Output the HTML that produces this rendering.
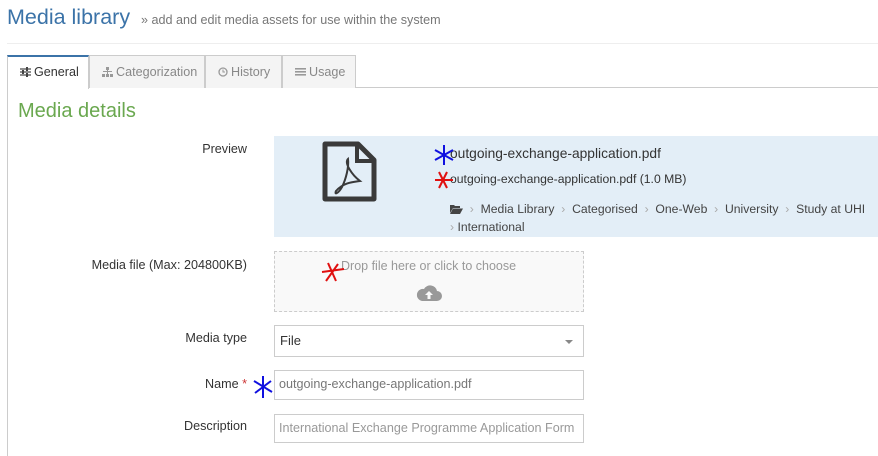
<!DOCTYPE html>
<html><head><style>
*{box-sizing:border-box;margin:0;padding:0}
body{width:878px;height:456px;overflow:hidden;background:#fff;font-family:"Liberation Sans",sans-serif;color:#333;position:relative}
.a{position:absolute}
.lbl{position:absolute;right:631px;font-size:12.6px;color:#333;text-align:right;white-space:nowrap}
.inp{position:absolute;left:274px;width:310px;border:1px solid #ccc;background:#fff;font-size:12.6px}
.tab{position:absolute;top:55px;height:33px;border:1px solid #ccc;border-bottom:none;background:#f4f4f4;font-size:12.6px;color:#888;padding:9px 0 0 12px;white-space:nowrap}
</style></head><body>
<div class="a" style="left:7px;top:5px;font-size:21.5px;color:#3b73a8">Media library</div>
<div class="a" style="left:141px;top:13px;font-size:12.6px;color:#777">» add and edit media assets for use within the system</div>
<div class="a" style="left:7px;top:43px;width:871px;border-top:1px solid #eee"></div>
<div class="a" style="left:7px;top:87px;width:871px;height:369px;border-left:1px solid #ccc;border-top:1px solid #ccc"></div>
<div class="tab" style="left:7px;width:82px;background:#fff;color:#333;border-top:2px solid #3b73a8;height:34px;padding-top:8px">
<svg width="11" height="10" style="vertical-align:-1px;margin-right:3px"><g stroke="#444" stroke-width="1.2"><line x1="0" y1="2" x2="11" y2="2"/><line x1="0" y1="5" x2="11" y2="5"/><line x1="0" y1="8" x2="11" y2="8"/></g><g fill="#444"><rect x="6" y="0" width="2" height="4"/><rect x="2" y="3" width="2" height="4"/><rect x="6" y="6" width="2" height="4"/></g></svg>General</div>
<div class="tab" style="left:89px;width:116px"><svg width="11" height="10" style="vertical-align:-1px;margin-right:3px" fill="#999"><rect x="4" y="0" width="3" height="3"/><rect x="0" y="7" width="3" height="3"/><rect x="4" y="7" width="3" height="3"/><rect x="8" y="7" width="3" height="3"/><rect x="1" y="4" width="9" height="1"/><rect x="5" y="3" width="1" height="4"/></svg>Categorization</div>
<div class="tab" style="left:205px;width:77px"><svg width="10" height="10" style="vertical-align:-1px;margin-right:3px"><circle cx="5" cy="5" r="4" fill="none" stroke="#999" stroke-width="1.3"/><path d="M5 2.5V5H7" stroke="#999" fill="none"/></svg>History</div>
<div class="tab" style="left:282px;width:74px"><svg width="11" height="10" style="vertical-align:-1px;margin-right:3px" fill="#999"><rect x="0" y="1" width="11" height="1.6"/><rect x="0" y="4" width="11" height="1.6"/><rect x="0" y="7" width="11" height="1.6"/></svg>Usage</div>
<div class="a" style="left:18px;top:100px;font-size:20px;color:#6aa84f">Media details</div>

<div class="lbl" style="top:142px">Preview</div>
<div class="a" style="left:274px;top:136px;width:604px;height:101px;background:#e3eef7"></div>
<svg class="a" style="left:322px;top:141px" width="56" height="62"><path d="M3 3H36L52 19V58H3Z" fill="none" stroke="#3a3a3a" stroke-width="5" stroke-linejoin="round"/><path d="M35 4V20H51" fill="none" stroke="#3a3a3a" stroke-width="4"/><path d="M26 18C22 22 30 34 38 40C32 41 22 41 14 50C12 54 16 53 20 46C24 38 27 26 26 18Z" fill="none" stroke="#3a3a3a" stroke-width="2"/></svg>
<div class="a" style="left:450px;top:146px;font-size:13.8px;color:#333">outgoing-exchange-application.pdf</div>
<div class="a" style="left:450px;top:172px;font-size:12.2px;color:#333">outgoing-exchange-application.pdf (1.0 MB)</div>
<svg class="a" style="left:433px;top:144px" width="22" height="22" stroke="#1010e0" stroke-width="2"><line x1="11" y1="1" x2="11" y2="21"/><line x1="2" y1="6" x2="20" y2="16"/><line x1="2" y1="16" x2="20" y2="6"/></svg>
<svg class="a" style="left:433px;top:170px" width="22" height="20" stroke="#e01010" stroke-width="2"><line x1="2" y1="10" x2="20" y2="10"/><line x1="6" y1="2" x2="14" y2="18"/><line x1="14" y1="2" x2="6" y2="18"/></svg>
<div class="a" style="left:450px;top:202px;font-size:12.2px;color:#444;white-space:nowrap"><svg width="13" height="10" style="vertical-align:-1px" fill="#444"><path d="M0 1H4L5 2H10V4H3L0 9Z"/><path d="M3 4.5H13L10 10H0Z"/></svg> <span style="color:#aaa">&nbsp;›&nbsp;</span> Media Library <span style="color:#aaa">&nbsp;›&nbsp;</span> Categorised <span style="color:#aaa">&nbsp;›&nbsp;</span> One-Web <span style="color:#aaa">&nbsp;›&nbsp;</span> University <span style="color:#aaa">&nbsp;›&nbsp;</span> Study at UHI</div>
<div class="a" style="left:450px;top:220px;font-size:12.2px;color:#444"><span style="color:#aaa">› </span>International</div>

<div class="lbl" style="top:258px">Media file (Max: 204800KB)</div>
<div class="a" style="left:274px;top:251px;width:310px;height:61px;border:1px dashed #ccc;background:#f9f9f9"></div>
<div class="a" style="left:341px;top:259px;font-size:12.5px;color:#999">Drop file here or click to choose</div>
<svg class="a" style="left:416px;top:282px" width="26" height="20"><path d="M6 19H21A5 5 0 0 0 21 9A7 7 0 0 0 8 7A6 6 0 0 0 6 19Z" fill="#999"/><path d="M13 9L9 13H11.5V17H14.5V13H17Z" fill="#f9f9f9"/></svg>
<svg class="a" style="left:320px;top:261px" width="26" height="22" stroke="#e01010" stroke-width="2"><line x1="2" y1="11" x2="24" y2="8"/><line x1="8" y1="2" x2="16" y2="20"/><line x1="18" y1="3" x2="6" y2="20"/></svg>

<div class="lbl" style="top:331px">Media type</div>
<div class="inp" style="top:325px;height:32px;padding:7px 0 0 5px;font-size:13px;color:#333">File<span style="position:absolute;right:10px;top:14px;border:4px solid transparent;border-top:4px solid #888;border-bottom:none"></span></div>

<div class="lbl" style="top:377px">Name <span style="color:#c33">*</span></div>
<svg class="a" style="left:252px;top:375px" width="22" height="24" stroke="#1010e0" stroke-width="2"><line x1="11" y1="1" x2="11" y2="23"/><line x1="2" y1="6" x2="20" y2="17"/><line x1="3" y1="18" x2="19" y2="6"/></svg>
<div class="inp" style="top:370px;height:30px;padding:6px 0 0 4px;color:#777">outgoing-exchange-application.pdf</div>

<div class="lbl" style="top:419px">Description</div>
<div class="inp" style="top:414px;height:29px;padding:6px 0 0 4px;color:#999;white-space:nowrap;overflow:hidden">International Exchange Programme Application Form</div>
</body></html>
